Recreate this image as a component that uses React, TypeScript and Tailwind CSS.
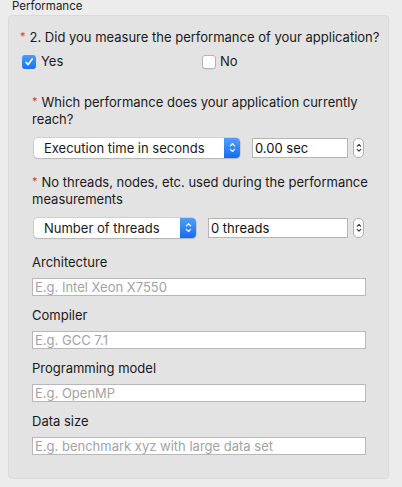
import React from "react";

const font = { fontFamily: 'Inter, "Liberation Sans", Arial, sans-serif' };

const Star = () => <span className="relative -top-[2px] mr-[4px] text-[11px] text-[#e0382e]">*</span>;

const Chevrons = ({ color, size = 8 }: { color: string; size?: number }) => (
  <svg width={size} height={size * 1.6} viewBox="0 0 8 13" fill="none" stroke={color} strokeWidth="1.4" strokeLinecap="round" strokeLinejoin="round">
    <path d="M1.5 4.5 L4 2 L6.5 4.5" />
    <path d="M1.5 8.5 L4 11 L6.5 8.5" />
  </svg>
);

const Checkbox = ({ checked }: { checked?: boolean }) =>
  checked ? (
    <div className="flex h-[14px] w-[14px] items-center justify-center rounded-[3px] bg-gradient-to-b from-[#4b9cf9] to-[#1b6ef3]">
      <svg width="10" height="10" viewBox="0 0 10 10" fill="none" stroke="white" strokeWidth="1.6" strokeLinecap="round" strokeLinejoin="round">
        <path d="M2 5.3 L4.1 7.6 L8.2 2" />
      </svg>
    </div>
  ) : (
    <div className="h-[14px] w-[14px] rounded-[3px] border border-[#b3b3b3] bg-white shadow-[0_0.5px_0.5px_rgba(0,0,0,0.1)]" />
  );

const Select = ({ label, width }: { label: string; width: string }) => (
  <div className={`flex h-[20px] ${width} items-stretch rounded-[4px] bg-white shadow-[0_0_0_0.5px_rgba(0,0,0,0.18),0_1px_1px_rgba(0,0,0,0.12)]`}>
    <div className="flex-1 pl-[10px] text-[13px] leading-[20px] text-[#1a1a1a]">{label}</div>
    <div className="flex w-[16px] items-center justify-center rounded-r-[4px] bg-gradient-to-b from-[#519ff8] to-[#176af2]">
      <Chevrons color="white" size={7} />
    </div>
  </div>
);

const Stepper = () => (
  <div className="flex h-[20px] w-[11px] items-center justify-center rounded-[5px] border border-[#b0b0b0] bg-white">
    <Chevrons color="#333" size={6} />
  </div>
);

const NumberInput = ({ value, width }: { value: string; width: string }) => (
  <div className={`h-[20px] ${width} border border-[#b5b5b5] bg-white pl-[2px] text-[13px] leading-[18px] text-[#111]`}>{value}</div>
);

const TextField = ({ label, placeholder, mt }: { label: string; placeholder: string; mt: string }) => (
  <>
    <div className={`${mt} h-[16px] text-[13px] leading-[16px] text-[#1a1a1a]`}>{label}</div>
    <div className="mt-[8px] h-[18px] w-[334px] border border-[#b8b8b8] bg-white pl-[2px] text-[13px] leading-[16px] text-[#a3a3a3]">{placeholder}</div>
  </>
);

export default function App() {
  return (
    <div className="h-[487px] w-[402px] bg-[#ececec]" style={font}>
      <div className="h-[15px] pl-3 text-[11.5px] leading-[13px] text-[#222]">Performance</div>
      <div className="ml-2 h-[464px] w-[381px] rounded-[4px] border border-[#dadada] bg-[#e3e3e3] pl-[11px] pt-[13px]">
        <div className="h-[16px] text-[13px] leading-[16px] text-[#1a1a1a]">
          <Star />2. Did you measure the performance of your application?
        </div>
        <div className="mt-[10px] flex h-[14px] items-center pl-[2px] text-[13px] text-[#1a1a1a]">
          <div className="flex w-[180px] items-center gap-[5px]">
            <Checkbox checked />
            <span>Yes</span>
          </div>
          <div className="flex items-center gap-[4px]">
            <Checkbox />
            <span>No</span>
          </div>
        </div>

        <div className="ml-[12px] mt-[25px] w-[330px] text-[13px] leading-[16px] text-[#1a1a1a]">
          <Star />Which performance does your application currently reach?
        </div>
        <div className="ml-[14px] mt-[11px] flex items-center">
          <Select label="Execution time in seconds" width="w-[206px]" />
          <div className="ml-[12px]">
            <NumberInput value="0.00 sec" width="w-[96px]" />
          </div>
          <div className="ml-[5px]">
            <Stepper />
          </div>
        </div>

        <div className="ml-[12px] mt-[16px] w-[342px] text-[13px] leading-[16px] text-[#1a1a1a]">
          <Star />No threads, nodes, etc. used during the performance measurements
        </div>
        <div className="ml-[14px] mt-[11px] flex items-center">
          <Select label="Number of threads" width="w-[162px]" />
          <div className="ml-[12px]">
            <NumberInput value="0 threads" width="w-[140px]" />
          </div>
          <div className="ml-[5px]">
            <Stepper />
          </div>
        </div>

        <div className="ml-[12px] flex flex-col">
          <TextField label="Architecture" placeholder="E.g. Intel Xeon X7550" mt="mt-[16px]" />
          <TextField label="Compiler" placeholder="E.g. GCC 7.1" mt="mt-[11px]" />
          <TextField label="Programming model" placeholder="E.g. OpenMP" mt="mt-[11px]" />
          <TextField label="Data size" placeholder="E.g. benchmark xyz with large data set" mt="mt-[11px]" />
        </div>
      </div>
    </div>
  );
}
